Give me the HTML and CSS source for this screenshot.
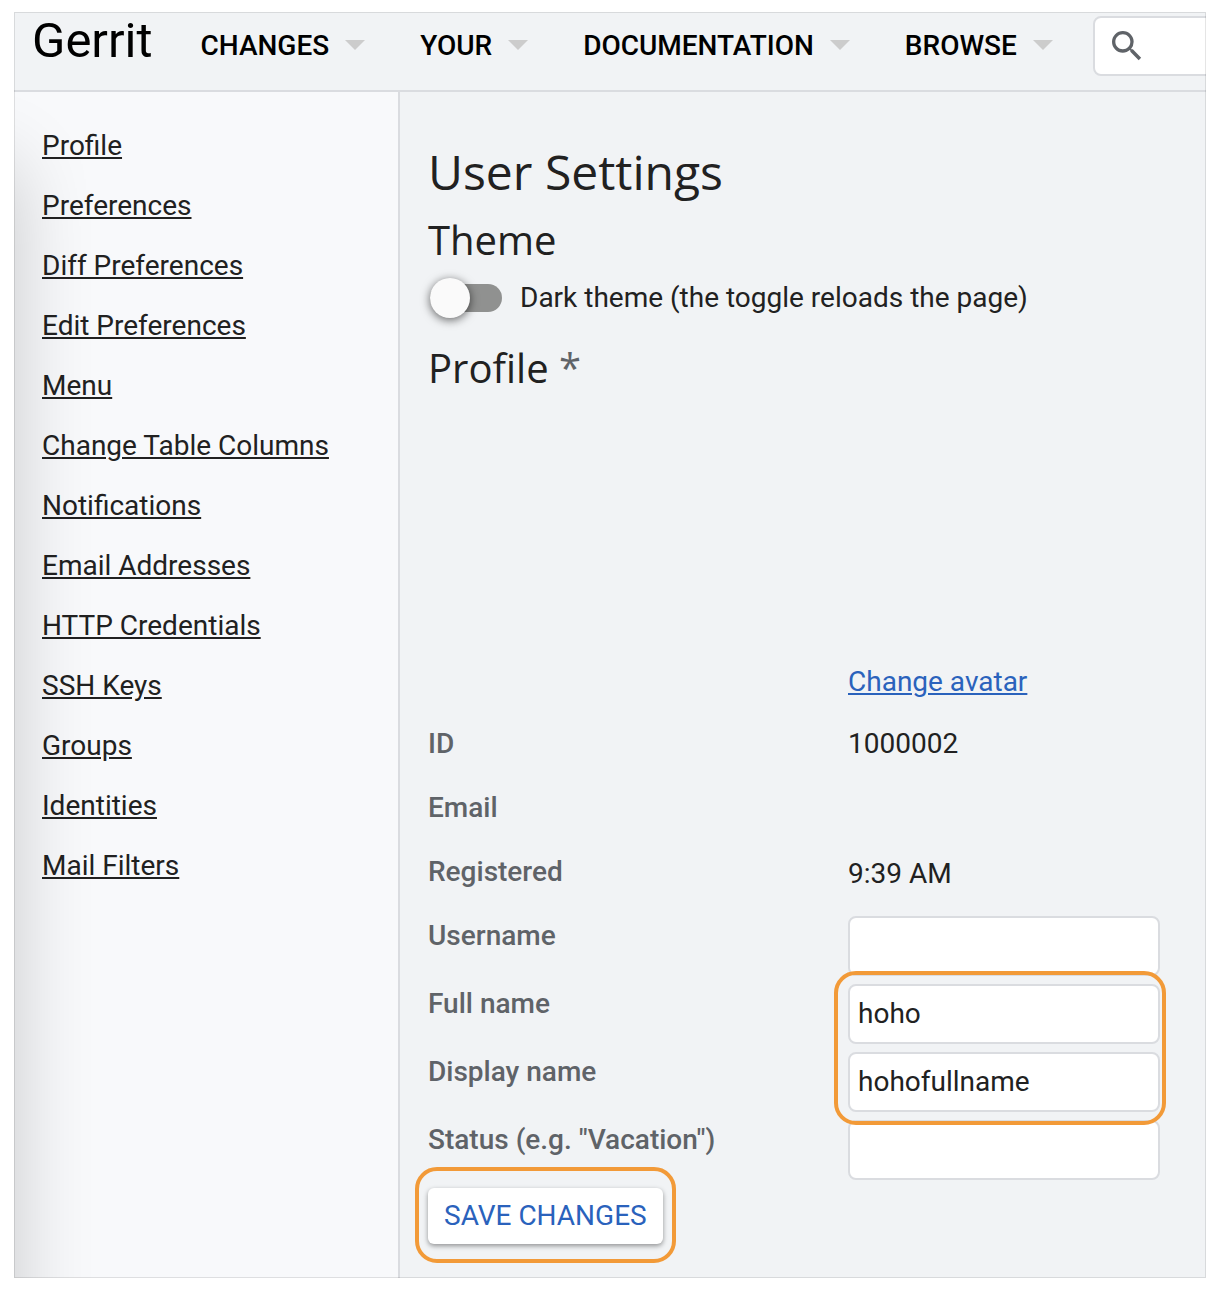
FILE: index.html
```html
<!DOCTYPE html>
<html lang="en">
<head>
<meta charset="utf-8">
<title>User Settings · Gerrit</title>
<link rel="stylesheet" href="styles.css">
</head>
<body>
<div class="window">
  <header class="header">
    <a class="logo">Gerrit</a>
    <nav class="nav">
      <a class="nav-item">CHANGES</a>
      <a class="nav-item">YOUR</a>
      <a class="nav-item">DOCUMENTATION</a>
      <a class="nav-item">BROWSE</a>
    </nav>
    <div class="search">
      <svg class="search-icon" viewBox="0 0 24 24"><path d="M15.5 14h-.79l-.28-.27A6.471 6.471 0 0 0 16 9.5 6.5 6.5 0 1 0 9.5 16c1.61 0 3.09-.59 4.23-1.57l.27.28v.79l5 4.99L20.49 19l-4.99-5zm-6 0C7.01 14 5 11.99 5 9.5S7.01 5 9.5 5 14 7.01 14 9.5 11.99 14 9.5 14z"/></svg>
    </div>
  </header>
  <div class="body">
    <ul class="sidebar">
      <li><a>Profile</a></li>
      <li><a>Preferences</a></li>
      <li><a>Diff Preferences</a></li>
      <li><a>Edit Preferences</a></li>
      <li><a>Menu</a></li>
      <li><a>Change Table Columns</a></li>
      <li><a>Notifications</a></li>
      <li><a>Email Addresses</a></li>
      <li><a>HTTP Credentials</a></li>
      <li><a>SSH Keys</a></li>
      <li><a>Groups</a></li>
      <li><a>Identities</a></li>
      <li><a>Mail Filters</a></li>
    </ul>
    <main class="main">
      <h1>User Settings</h1>
      <h2>Theme</h2>
      <div class="theme">
        <span class="toggle"><span class="knob"></span></span>
        <span class="theme-label">Dark theme (the toggle reloads the page)</span>
      </div>
      <h2>Profile <span class="unsaved">*</span></h2>
      <div class="form">
        <div class="row"><span></span><a class="avatar-link">Change avatar</a></div>
        <div class="row"><span class="label">ID</span><span>1000002</span></div>
        <div class="row"><span class="label">Email</span><span></span></div>
        <div class="row"><span class="label">Registered</span><span class="date">9:39 AM</span></div>
        <div class="row field"><span class="label">Username</span><div class="input"></div></div>
        <div class="highlighted">
          <div class="row field"><span class="label">Full name</span><div class="input">hoho</div></div>
          <div class="row field"><span class="label">Display name</span><div class="input">hohofullname</div></div>
        </div>
        <div class="row field"><span class="label">Status (e.g. "Vacation")</span><div class="input"></div></div>
      </div>
      <div class="save-area"><button class="save">SAVE CHANGES</button></div>
    </main>
  </div>
</div>
</body>
</html>
```
FILE: styles.css
```css
*, *::before, *::after { box-sizing: border-box; }

body {
  margin: 0;
  padding: 12px 18px 16px 14px;
  background: #fff;
  color: #212121;
  font: 28px/40px Roboto, "Liberation Sans", sans-serif;
}

.window {
  position: relative;
  display: flex;
  flex-direction: column;
  width: 1192px;
  height: 1266px;
  overflow: hidden;
  background: #f1f3f5;
}

/* hairline round the window, over everything in it */
.window::after {
  content: "";
  position: absolute;
  inset: 0;
  border: 1px solid rgba(0, 0, 0, 0.1);
}

/* soft shade falling in from the left edge */
.window::before {
  content: "";
  position: absolute;
  left: -100px;
  top: 152px;
  width: 100px;
  height: 1400px;
  box-shadow: 0 0 80px rgba(0, 0, 0, 0.2);
}

.header {
  display: flex;
  align-items: flex-start;
  flex: none;
  height: 80px;
  padding-left: 18px;
  border-bottom: 2px solid #dadce0;
  color: #000;
}

.logo {
  flex: none;
  width: 168.5px;
  padding-top: 1px;
  font-size: 49px;
  line-height: 56px;
}

.nav {
  display: flex;
  flex: none;
  gap: 55px;
  padding-top: 14px;
  width: 892.5px;
}

.nav-item {
  display: flex;
  align-items: flex-start;
  font-weight: 500;
}

.nav-item::after {
  content: "";
  width: 20px;
  height: 10px;
  margin: 14px 0 0 16px;
  border: 10px solid transparent;
  border-top-color: #ccc;
  border-bottom: 0;
}

.search {
  flex: none;
  width: 200px;
  height: 60px;
  margin-top: 4px;
  padding: 8px 12px;
  border: 2px solid #dadce0;
  border-radius: 8px;
  background: #fff;
}

.search-icon {
  display: block;
  width: 40px;
  height: 40px;
  fill: #5f6368;
}

.body {
  display: flex;
  flex: 1;
}

.sidebar {
  width: 386px;
  margin: 0;
  padding: 24px 0 0 28px;
  border-right: 2px solid #dadce0;
  background: #f8f9fb;
  list-style: none;
}

.sidebar li { padding: 10px 0; }

.sidebar a,
.avatar-link {
  text-decoration: underline;
}

.main {
  flex: 1;
  padding: 48px 0 0 28px;
}

h1, h2 {
  margin: 0;
  font-family: "Open Sans", sans-serif;
  font-weight: 400;
}

h1 { font-size: 48px; line-height: 64px; margin-bottom: 8px; }
h2 { font-size: 40px; line-height: 56px; }

.unsaved { color: #5f6368; }

.theme {
  display: flex;
  align-items: center;
  height: 40px;
  margin: 10px 0 22px;
}

.toggle {
  width: 72px;
  height: 28px;
  margin: 0 18px 0 2px;
  border-radius: 14px;
  background: #909190;
}

.knob {
  display: block;
  width: 40px;
  height: 40px;
  margin-top: -6px;
  border-radius: 50%;
  background: #fafafa;
  box-shadow: 0 2px 10px rgba(0, 0, 0, 0.6);
}

.form { margin-top: 264px; }

.row {
  display: grid;
  grid-template-columns: 420px 312px;
  height: 64px;
}

.row.field { height: 68px; }

.label {
  color: #5f6368;
  font-weight: 500;
}

.avatar-link {
  padding-top: 2px;
  color: #2a62bc;
}

.date { padding-top: 2px; }

.input {
  height: 60px;
  padding: 8px;
  border: 2px solid #dadce0;
  border-radius: 8px;
  background: #fff;
}

.highlighted,
.save-area {
  position: relative;
}

/* orange callout outlines */
.highlighted::after,
.save-area::after {
  content: "";
  position: absolute;
  border: 4px solid #f29a38;
  border-radius: 22px;
}

.highlighted::after {
  left: 406px;
  top: -13px;
  width: 332px;
  height: 154px;
}

.save-area::after {
  left: -13px;
  top: -21px;
  width: 261px;
  height: 96px;
}

.save {
  display: block;
  height: 56px;
  padding: 0 16px;
  border: 0;
  border-radius: 6px;
  background: #fff;
  color: #2a62bc;
  font: inherit;
  box-shadow: 0 2px 5px rgba(0, 0, 0, 0.4);
}
```
